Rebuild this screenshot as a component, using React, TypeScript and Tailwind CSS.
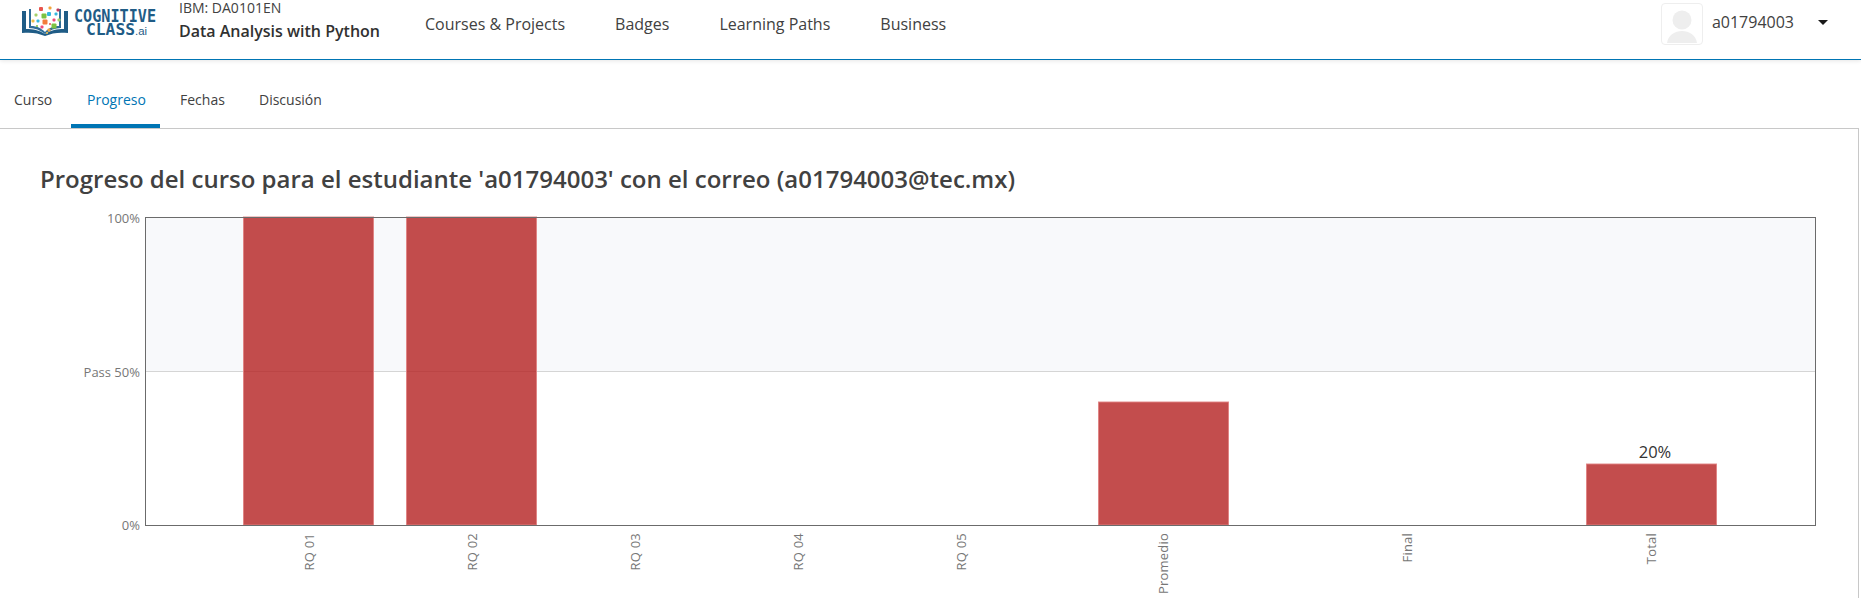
import React from 'react';

const navLinks = [
  { label: 'Courses & Projects', className: 'ml-[45px]' },
  { label: 'Badges', className: 'ml-[50px]' },
  { label: 'Learning Paths', className: 'ml-[50px]' },
  { label: 'Business', className: 'ml-[50px]' },
];

const tabs = [
  { label: 'Curso', className: 'w-[71px] pl-[14px] text-[#414141] border-transparent' },
  { label: 'Progreso', className: 'w-[89px] pl-[16px] text-[#0075b4] border-[#0075b4]' },
  { label: 'Fechas', className: 'w-[99px] pl-[20px] text-[#414141] border-transparent' },
  { label: 'Discusión', className: 'text-[#414141] border-transparent' },
];

// bars of the flot chart, in svg coordinates
const bars = [
  { x: 243.5, y: 0, w: 130, h: 308 },
  { x: 406.5, y: 0, w: 130, h: 308 },
  { x: 1098.5, y: 185, w: 130, h: 123 },
  { x: 1586.5, y: 247, w: 130, h: 61 },
];

const xLabels = [
  { label: 'RQ 01', x: 314 },
  { label: 'RQ 02', x: 477 },
  { label: 'RQ 03', x: 640 },
  { label: 'RQ 04', x: 803 },
  { label: 'RQ 05', x: 966 },
  { label: 'e Promedio', x: 1168 },
  { label: 'Final', x: 1412 },
  { label: 'Total', x: 1656 },
];

const dots = [
  ['#e8554e', 23, 6, 4], ['#f2a33a', 32, 5, 3], ['#35b8e0', 31, 11, 4], ['#7dc242', 26, 13, 5], ['#a5d06a', 18, 12, 3],
  ['#f0c04a', 15, 18, 3], ['#ee4b7c', 36, 17, 3], ['#35b8e0', 38, 11, 3], ['#c2385a', 40, 7, 3], ['#f47b3b', 27, 19, 5],
  ['#7dc242', 36, 23, 5], ['#ee4b7c', 24, 24, 3], ['#f2a33a', 31, 27, 3], ['#a5d06a', 41, 17, 3], ['#35b8e0', 20, 18, 3],
  ['#7dc242', 19, 23, 2], ['#e8554e', 32, 21, 2], ['#f0c04a', 29, 30, 2],
] as const;

function Logo() {
  const mono = "'DejaVu Sans Mono', monospace";
  return (
    <svg width="140" height="40" viewBox="0 0 140 40" className="shrink-0">
      <path d="M4 8h4v18c7 0 13 1 19 5 6-4 12-5 19-5V8h4v22c-9-1-16 0-23 3-7-3-14-4-23-3z" fill="#1f5c86" />
      <path d="M11 6h2v17c6 0 10 2 14 6 4-4 8-6 14-6V6h2v19c-6 0-11 2-16 6-5-4-10-6-16-6z" fill="#2f6e99" />
      {dots.map(([color, x, y, s], i) => (
        <rect key={i} x={x - s / 2} y={y - s / 2} width={s} height={s} rx="1" fill={color} />
      ))}
      <text x="56" y="19" textLength="82" lengthAdjust="spacingAndGlyphs" fontSize="18" fontWeight="700" fill="#1f5c86" fontFamily={mono}>COGNITIVE</text>
      <text x="68" y="32" textLength="49" lengthAdjust="spacingAndGlyphs" fontSize="16" fontWeight="700" fill="#1f5c86" fontFamily={mono}>CLASS</text>
      <text x="117" y="32" textLength="12" lengthAdjust="spacingAndGlyphs" fontSize="10" fill="#1f5c86" fontFamily="'Liberation Sans', sans-serif">.ai</text>
    </svg>
  );
}

function Avatar() {
  return (
    <svg width="40" height="40" viewBox="0 0 40 40">
      <circle cx="20" cy="16" r="9.5" fill="#eeeeee" />
      <path d="M5 39C6 31 13 27 20 27s14 4 15 12z" fill="#eeeeee" />
    </svg>
  );
}

function ProgressChart() {
  return (
    <svg width="1858" height="392" viewBox="0 -11 1858 392" className="block" fontFamily="'Open Sans', sans-serif">
      <rect x="145" y="0" width="1670" height="154" fill="#f8f9fb" />
      <line x1="145" x2="1815" y1="154.5" y2="154.5" stroke="#d5d5d5" />
      {bars.map((b) => (
        <rect key={b.x} x={b.x} y={b.y} width={b.w} height={b.h} fill="rgba(180, 32, 32, 0.8)" stroke="rgba(224, 130, 130, 0.9)" />
      ))}
      <rect x="145.5" y="0.5" width="1670" height="308" fill="none" stroke="#6b6b6b" />
      <g fontSize="13" fill="#777" textAnchor="end">
        <text x="140" y="6">100%</text>
        <text x="140" y="160">Pass 50%</text>
        <text x="140" y="313">0%</text>
      </g>
      <text x="1655" y="241" fontSize="16.5" fill="#333" textAnchor="middle">20%</text>
      {xLabels.map((l) => (
        <text key={l.label} transform={`translate(${l.x}, 316) rotate(-90)`} textAnchor="end" fontSize="13" letterSpacing="0.2" fill="#777">
          {l.label}
        </text>
      ))}
    </svg>
  );
}

export default function App() {
  return (
    <div className="h-[598px] w-[1861px] overflow-hidden bg-white text-[#414141] font-['Open_Sans',sans-serif]">
      {/* Cabecera */}
      <header className="flex h-[60px] items-start border-b border-[#0075b4] shadow-[0_1px_4px_rgba(0,0,0,0.1)]">
        <div className="ml-[18px] mt-[3px]">
          <Logo />
        </div>
        <div className="ml-[21px] flex flex-col">
          <span className="text-[14px] leading-[16px] text-[#414141]">IBM: DA0101EN</span>
          <span className="mt-[4px] text-[16px] leading-[22px] font-semibold text-[#313131]">Data Analysis with Python</span>
        </div>
        <nav className="flex h-[48px] items-center">
          {navLinks.map((link) => (
            <a key={link.label} className={`text-[16px] text-[#414141] ${link.className}`}>
              {link.label}
            </a>
          ))}
        </nav>
        <div className="ml-auto flex h-[48px] items-center">
          <div className="flex h-[42px] w-[42px] items-center justify-center overflow-hidden rounded-[4px] border border-[#eeeeee]">
            <Avatar />
          </div>
          <span className="mb-[4px] ml-[9px] text-[16px] text-[#414141]">a01794003</span>
          <span className="mb-[4px] ml-[24px] mr-[33px] h-0 w-0 border-x-[5px] border-t-[5px] border-x-transparent border-t-[#1a1a1a]" />
        </div>
      </header>

      {/* Pestañas */}
      <div className="flex h-[68px] items-stretch text-[14px]">
        {tabs.map((tab) => (
          <a key={tab.label} className={`flex items-center border-b-[4px] pt-[15px] ${tab.className}`}>
            {tab.label}
          </a>
        ))}
      </div>

      {/* Contenido */}
      <main className="mr-[2px] h-[470px] border-r border-t border-[#c8c8c8]">
        <h1 className="ml-[40px] mt-[33px] h-[44px] text-[24px] leading-[33px] font-semibold text-[#414141]">
          Progreso del curso para el estudiante 'a01794003' con el correo (a01794003@tec.mx)
        </h1>
        <ProgressChart />
      </main>
    </div>
  );
}
